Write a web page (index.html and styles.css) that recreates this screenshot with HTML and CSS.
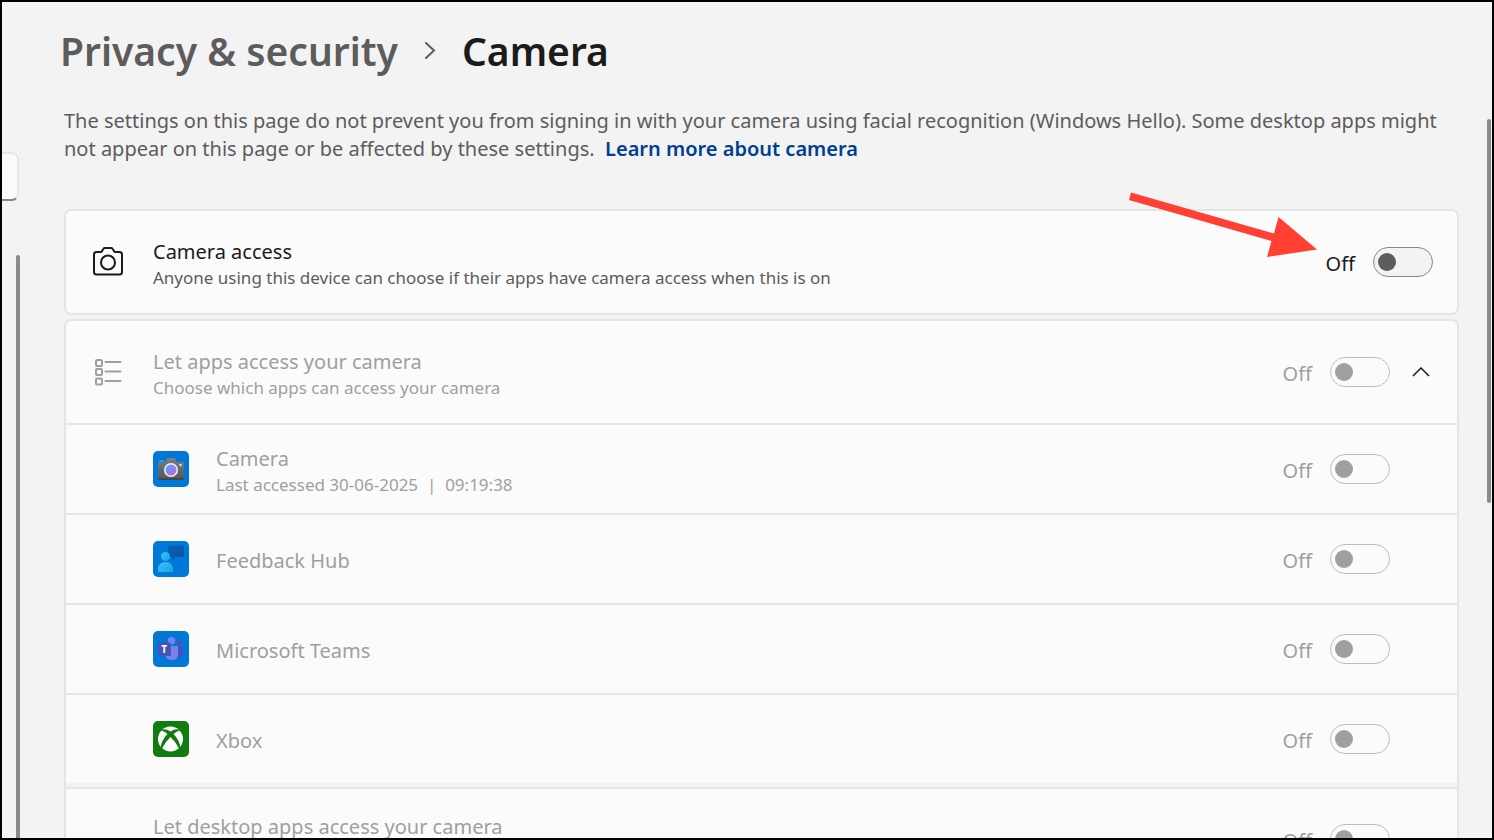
FILE: index.html
```html
<!DOCTYPE html>
<html lang="en">
<head>
    <meta charset="UTF-8">
    <meta name="viewport" content="width=device-width, initial-scale=1.0">
    <title>Privacy &amp; security - Camera</title>
    <link rel="stylesheet" href="styles.css">
</head>
<body>
    <div class="window">

        <!-- Navigation pane -->
        <aside class="sidebar">
            <input type="text" class="search" aria-label="Find a setting">
            <div class="nav-scroll"></div>
        </aside>

        <!-- Page content -->
        <main class="content">
            <h1 class="breadcrumb">
                <a href="#privacy">Privacy &amp; security</a>
                <svg width="12" height="18" viewBox="0 0 12 18" fill="none" stroke="#5c5c5c" stroke-width="2" stroke-linecap="round"><path d="M2 1l8 7.500-8 7.500"/></svg>
                <span>Camera</span>
            </h1>

            <p class="intro">The settings on this page do not prevent you from signing in with your camera using facial recognition (Windows Hello). Some desktop apps might not appear on this page or be affected by these settings.&nbsp; <a href="#learn">Learn more about camera</a></p>

            <section class="card">
                <div class="row main-row">
                    <svg class="icon" width="30" height="30" viewBox="0 0 30 30" fill="none" stroke="#1b1b1b" stroke-width="2"><path d="M3.500 5H7.500q1 0 1.500-1L10 2.500q.6-1.500 1.700-1.500h6.600q1.100 0 1.700 1.500l1 1.500q.5 1 1.500 1h4q2.500 0 2.500 2.500v17.500q0 2.500-2.500 2.500h-23Q1 27.500 1 25V7.500q0-2.500 2.500-2.500z"/><circle cx="15" cy="15.500" r="7"/></svg>
                    <div class="text">
                        <label for="camera-access">Camera access</label>
                        <small>Anyone using this device can choose if their apps have camera access when this is on</small>
                    </div>
                    <span class="state">Off</span>
                    <input type="checkbox" class="toggle" id="camera-access">
                </div>
                <svg class="arrow" width="190" height="66" viewBox="0 0 190 66" fill="#ff4033"><path d="M4 .5L147 41.500 151.500 25 190 57.500 140 65l4.500-16L2 8z"/></svg>
            </section>

            <section class="card apps">
                <div class="row main-row disabled">
                    <svg class="icon" width="30" height="30" viewBox="0 0 30 30" fill="none" stroke="#9f9f9f" stroke-width="2"><rect x="3" y="3" width="6" height="6" rx="1"/><rect x="3" y="12" width="6" height="6" rx="1"/><rect x="3" y="21.500" width="6" height="6" rx="1"/><path d="M12.500 5h15M12.500 14.500h15M12.500 24h15" stroke-linecap="round"/></svg>
                    <div class="text">
                        <label for="let-apps">Let apps access your camera</label>
                        <small>Choose which apps can access your camera</small>
                    </div>
                    <span class="state">Off</span>
                    <input type="checkbox" class="toggle" id="let-apps" disabled>
                    <button type="button" class="expand" aria-label="Collapse app list">
                        <svg width="18" height="10" viewBox="0 0 18 10" fill="none" stroke="#1b1b1b" stroke-width="1.500"><path d="M1 9l8-8 8 8"/></svg>
                    </button>
                </div>

                <div class="row app-row disabled">
                    <svg class="app-icon" width="36" height="36" viewBox="0 0 36 36">
                        <defs>
                            <linearGradient id="lens" x1="0" y1="0" x2="1" y2="1"><stop offset="0" stop-color="#35b8f5"/><stop offset=".5" stop-color="#8d82ec"/><stop offset="1" stop-color="#d15bdd"/></linearGradient>
                            <linearGradient id="case" x1="0" y1="0" x2="0" y2="1"><stop offset="0" stop-color="#797c80"/><stop offset="1" stop-color="#55585b"/></linearGradient>
                        </defs>
                        <rect width="36" height="36" rx="5" fill="#0078d7"/>
                        <rect x="6" y="9" width="5" height="4" rx="1" fill="#16a6ec"/>
                        <path d="M5 11h7l2-4h8l2 4h7v16q0 2-2 2H7q-2 0-2-2z" fill="url(#case)"/>
                        <path d="M5 27h26q0 2-2 2H7q-2 0-2-2z" fill="#45484b"/>
                        <circle cx="18" cy="19" r="7" fill="#f2f2f2"/>
                        <circle cx="18" cy="19" r="5.500" fill="url(#lens)"/>
                        <circle cx="27.500" cy="14" r="1.300" fill="#d5d8da"/>
                    </svg>
                    <div class="text">
                        <label for="app-camera">Camera</label>
                        <small>Last accessed 30-06-2025&nbsp; |&nbsp; 09:19:38</small>
                    </div>
                    <span class="state">Off</span>
                    <input type="checkbox" class="toggle" id="app-camera" disabled>
                </div>

                <div class="row app-row disabled">
                    <svg class="app-icon" width="36" height="36" viewBox="0 0 36 36">
                        <defs>
                            <linearGradient id="person" x1="0" y1="0" x2="1" y2="1"><stop offset="0" stop-color="#3dc6f4"/><stop offset="1" stop-color="#1c9fe6"/></linearGradient>
                            <linearGradient id="bubble" x1="0" y1="0" x2="1" y2="1"><stop offset="0" stop-color="#0763b6"/><stop offset="1" stop-color="#0a50a0"/></linearGradient>
                        </defs>
                        <rect width="36" height="36" rx="5" fill="#0078d7"/>
                        <path d="M15 4.500h16v11.500h-8.500L19 19.500V16h-4z" fill="url(#bubble)"/>
                        <circle cx="12.500" cy="15.500" r="4.500" fill="url(#person)"/>
                        <path d="M5 31v-2q0-8 7.500-8t7.500 8v2z" fill="url(#person)"/>
                    </svg>
                    <div class="text">
                        <label for="app-feedback">Feedback Hub</label>
                    </div>
                    <span class="state">Off</span>
                    <input type="checkbox" class="toggle" id="app-feedback" disabled>
                </div>

                <div class="row app-row disabled">
                    <svg class="app-icon" width="36" height="36" viewBox="0 0 36 36">
                        <rect width="36" height="36" rx="5" fill="#0078d7"/>
                        <circle cx="26.300" cy="11" r="2.600" fill="#4b50bd"/>
                        <path d="M23 15h7v7q0 4.500-4.500 4.500H23z" fill="#4b50bd"/>
                        <circle cx="18.500" cy="9.700" r="3.700" fill="#7b83eb"/>
                        <path d="M12.500 15H25v8q0 6-6.200 6t-6.300-6z" fill="#7b83eb"/>
                        <path d="M13 15h5v10h-5z" fill="#5b62cc"/>
                        <rect x="5" y="11.500" width="12.500" height="13" rx="1" fill="#4651b6"/>
                        <text x="11.200" y="21.500" text-anchor="middle" class="teams-letter">T</text>
                    </svg>
                    <div class="text">
                        <label for="app-teams">Microsoft Teams</label>
                    </div>
                    <span class="state">Off</span>
                    <input type="checkbox" class="toggle" id="app-teams" disabled>
                </div>

                <div class="row app-row disabled">
                    <svg class="app-icon" width="36" height="36" viewBox="0 0 36 36">
                        <rect width="36" height="36" rx="5" fill="#107c10"/>
                        <circle cx="17.500" cy="18" r="12.500" fill="#fff"/>
                        <path d="M9 8.500Q13 7.500 17.500 10.500 22 7.500 26 8.500L27.500 9.500Q24.500 9.500 20.500 13 26.500 19 27.500 27L26 27.500Q22.500 20.500 17.500 16 12.500 20.500 9 27.500L7.500 27Q8.500 19 14.500 13 10.500 9.500 7.500 9.500z" fill="#107c10"/>
                    </svg>
                    <div class="text">
                        <label for="app-xbox">Xbox</label>
                    </div>
                    <span class="state">Off</span>
                    <input type="checkbox" class="toggle" id="app-xbox" disabled>
                </div>

                <div class="row desktop-row disabled">
                    <div class="text">
                        <label for="app-desktop">Let desktop apps access your camera</label>
                    </div>
                    <span class="state">Off</span>
                    <input type="checkbox" class="toggle" id="app-desktop" disabled>
                </div>
            </section>
        </main>

        <div class="page-scroll"></div>
    </div>
</body>
</html>
```
FILE: styles.css
```css
* {
    box-sizing: border-box;
}

body {
    margin: 0;
    background-color: #f3f3f3;
    color: #1b1b1b;
    font-family: "Segoe UI", "Noto Sans", sans-serif;
    font-size: 20px;
    line-height: 28px;
}

.window {
    display: flex;
    height: 100vh;
    border: 2px solid #000;
    overflow: hidden;
}

/* Navigation pane */
.sidebar {
    display: flex;
    flex-direction: column;
    flex: none;
    width: 18px;
    padding-top: 150px;
}

.search {
    width: 17px;
    height: 49px;
    padding: 0;
    border: 2px solid #e6e6e6;
    border-left: none;
    border-bottom-color: #868686;
    border-radius: 0 7px 7px 0;
    background-color: #fbfbfb;
}

.nav-scroll {
    flex: 1;
    width: 4px;
    margin-top: 54px;
    margin-left: 14px;
    border-radius: 2px 2px 0 0;
    background-color: #8a8a8a;
}

/* Page content */
.content {
    flex: 1;
    min-width: 0;
    padding: 21px 28px 0 44px;
}

.breadcrumb {
    display: flex;
    align-items: center;
    gap: 26px;
    margin: 0 0 28px -4px;
    font-size: 39px;
    font-weight: 600;
    line-height: 56px;
}

.breadcrumb a {
    color: #5c5c5c;
    text-decoration: none;
}

.intro {
    margin: 0 0 46px;
    color: #5c5c5c;
}

.intro a {
    color: #003e92;
    font-weight: 600;
    text-decoration: none;
}

/* Setting cards */
.card {
    position: relative;
    margin-bottom: 4px;
    border: 2px solid #e5e5e5;
    border-radius: 7px;
    background-color: #fbfbfb;
}

.row {
    display: flex;
    align-items: center;
}

.main-row {
    min-height: 102px;
    padding: 0 24px 0 27px;
}

.app-row {
    min-height: 90px;
    padding: 0 67px 0 87px;
    border-top: 2px solid #e5e5e5;
}

.desktop-row {
    min-height: 102px;
    margin-top: 4px;
    padding: 0 67px 0 87px;
    border-top: 2px solid #e5e5e5;
    box-shadow: 0 -4px 0 #f3f3f3;
}

.icon {
    flex: none;
    margin-right: 30px;
}

.app-icon {
    flex: none;
    margin-right: 27px;
}

.teams-letter {
    fill: #fff;
    font-size: 10px;
    font-weight: 700;
}

.text {
    flex: 1;
    min-width: 0;
    padding-top: 3px;
}

.desktop-row .text {
    padding: 0 0 24px;
}

.text label,
.text small {
    display: block;
}

.text small {
    color: #5c5c5c;
    font-size: 17px;
    line-height: 24px;
}

.state {
    margin-right: 18px;
    padding-top: 3px;
}

.disabled,
.disabled small {
    color: #9f9f9f;
}

/* Toggle switch */
.toggle {
    appearance: none;
    display: flex;
    align-items: center;
    flex: none;
    width: 60px;
    height: 30px;
    margin: 0;
    padding-left: 4px;
    border: 1px solid #868686;
    border-radius: 15px;
    background-color: #f3f3f3;
}

.toggle::before {
    content: "";
    width: 18px;
    height: 18px;
    border-radius: 50%;
    background-color: #5c5c5c;
}

.toggle:disabled {
    border-color: #bdbdbd;
    background-color: #fbfbfb;
}

.toggle:disabled::before {
    background-color: #9f9f9f;
}

.expand {
    display: flex;
    align-items: center;
    justify-content: center;
    width: 24px;
    height: 24px;
    margin-left: 19px;
    padding: 0;
    border: none;
    background: none;
}

/* Arrow over the first card */
.arrow {
    position: absolute;
    top: -19px;
    right: 140px;
}

/* Page scrollbar */
.page-scroll {
    flex: none;
    width: 4px;
    height: 384px;
    margin: 117px 1px 0 0;
    border-radius: 2px;
    background-color: #8a8a8a;
}
```
